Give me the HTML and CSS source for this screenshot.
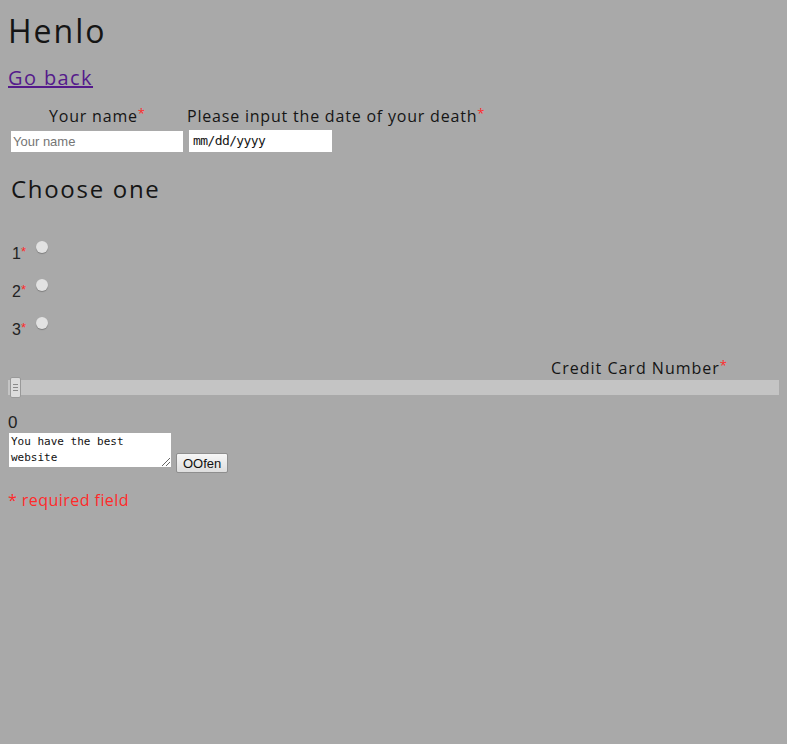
FILE: index.html
```html
<!DOCTYPE html>
<html>
<head>
<meta charset="utf-8">
<link rel="stylesheet" href="styles.css">
</head>
<body>
<h1 class="title">Henlo</h1>
<a class="back" href="#">Go back</a>
<form class="form">
  <table class="fields">
    <tr>
      <td class="lbl">Your name<span class="req">*</span></td>
      <td class="lbl">Please input the date of your death<span class="req">*</span></td>
    </tr>
    <tr>
      <td><input class="name" type="text" placeholder="Your name"></td>
      <td><div class="date">mm/dd/yyyy</div></td>
    </tr>
  </table>
  <h2 class="choose">Choose one</h2>
  <div class="radios">
    <div class="rrow"><span class="num">1<span class="req">*</span></span><span class="radio"></span></div>
    <div class="rrow"><span class="num">2<span class="req">*</span></span><span class="radio"></span></div>
    <div class="rrow"><span class="num">3<span class="req">*</span></span><span class="radio"></span></div>
  </div>
  <div class="cc">Credit Card Number<span class="req">*</span></div>
  <div class="slider"><span class="thumb"><i></i><i></i><i></i></span></div>
  <div class="zero">0</div>
  <div class="bottom">
    <div class="ta">You have the best website<span class="grip"></span></div>
    <button class="btn" type="button">OOfen</button>
  </div>
  <p class="note">* required field</p>
</form>
</body>
</html>
```
FILE: styles.css
```css
html { background: #a9a9a9; overflow-x: hidden; }
body {
  margin: 8px;
  background: #a9a9a9;
  font-family: "Open Sans", sans-serif;
  color: #151515;
}
.title {
  font-size: 32px;
  font-weight: 400;
  letter-spacing: 2px;
  margin: 0;
  line-height: 46px;
}
.back {
  display: inline-block;
  font-size: 20px;
  letter-spacing: 1.4px;
  color: #551a8b;
  margin-top: 10px;
  line-height: 28px;
}
.fields { border-spacing: 2px; margin-top: 8px; }
.fields td { padding: 1px; }
.lbl {
  font-size: 16px;
  letter-spacing: 0.8px;
  text-align: center;
  line-height: 20px;
}
.req { color: #ff2a2a; font-size: 13px; vertical-align: 4px; letter-spacing: 0; }
.name {
  box-sizing: border-box;
  width: 172px;
  height: 21px;
  border: 0;
  padding: 1px 2px;
  font: 13px "Liberation Sans", Arial, sans-serif;
  margin: 0;
  display: block;
}
.name::placeholder { color: #757575; }
.date {
  box-sizing: border-box;
  width: 143px;
  height: 22px;
  margin-left: 2px;
  background: #fff;
  font: 13px "DejaVu Sans Mono", monospace;
  letter-spacing: -0.6px;
  padding: 3px 4px;
}
.choose {
  font-size: 24px;
  font-weight: 400;
  letter-spacing: 1.7px;
  margin: 19px 0 0 3px;
  line-height: 30px;
}
.radios { margin-top: 37px; margin-left: 4px; }
.rrow {
  display: flex;
  align-items: flex-start;
  height: 38px;
}
.num {
  font: 16px "Liberation Sans", Arial, sans-serif;
  width: 24px;
  margin-top: 3px;
  color: #222;
}
.num .req { font-size: 13px; vertical-align: 3px; }
.radio {
  width: 12px;
  height: 12px;
  border-radius: 50%;
  background: #e2e2e2;
  box-shadow: 0 1px 1px rgba(0,0,0,0.25);
}
.cc {
  text-align: right;
  font-size: 16px;
  letter-spacing: 1px;
  margin-top: 0;
  margin-right: 52px;
  line-height: 20px;
}
.slider {
  position: relative;
  height: 15px;
  margin-right: -40px;
  background: #c4c4c4;
  margin-top: 2px;
}
.thumb {
  position: absolute;
  left: 2px;
  top: -3px;
  width: 9px;
  height: 19px;
  background: #dcdcdc;
  border: 1px solid #999;
  border-radius: 2px;
  display: flex;
  flex-direction: column;
  align-items: center;
  justify-content: center;
  gap: 2px;
}
.thumb i {
  display: block;
  width: 5px;
  height: 1px;
  background: #8a8a8a;
}
.zero {
  font: 17px "Liberation Sans", Arial, sans-serif;
  margin-top: 18px;
  color: #222;
}
.bottom { display: flex; align-items: flex-end; gap: 5px; }
.ta {
  position: relative;
  box-sizing: border-box;
  width: 162px;
  height: 34px;
  margin-left: 1px;
  background: #fff;
  font: 11px/16px "DejaVu Sans Mono", monospace;
  padding: 1px 2px;
  color: #111;
}
.grip {
  position: absolute;
  right: 1px;
  bottom: 1px;
  width: 8px;
  height: 8px;
  background: linear-gradient(135deg, transparent 45%, #666 45%, #666 52%, transparent 52%, transparent 70%, #666 70%, #666 77%, transparent 77%);
}
.btn {
  font: 13px "Liberation Sans", Arial, sans-serif;
  background: linear-gradient(#f6f6f6, #dedede);
  border: 1px solid #8e8e8e;
  border-radius: 2px;
  height: 20px;
  padding: 0 6px;
  margin-bottom: -6px;
  color: #111;
}
.note {
  color: #ff2a2a;
  font-size: 16px;
  letter-spacing: 0.45px;
  margin: 22px 0 0 0;
}
.note .req { vertical-align: 0; font-size: 16px; letter-spacing: 0.45px; }
```
